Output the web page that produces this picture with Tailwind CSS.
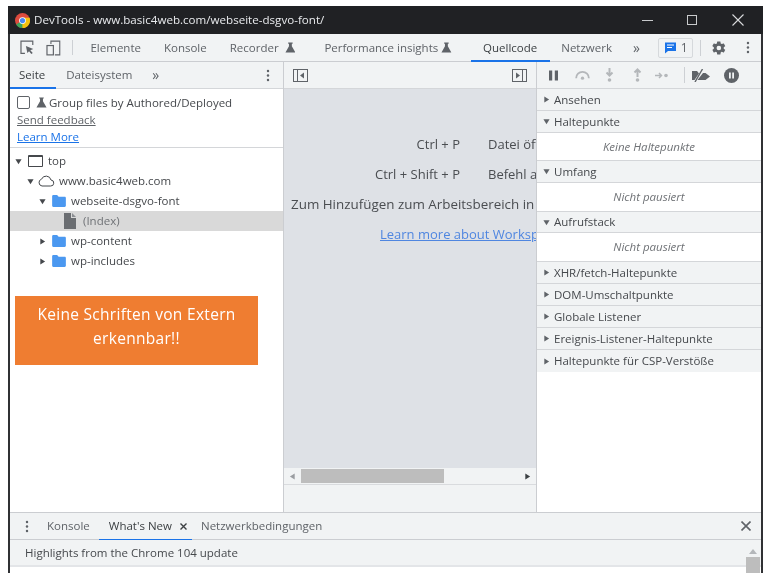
<!DOCTYPE html>
<html lang="de">
<head>
    <meta charset="UTF-8">
    <title>DevTools - www.basic4web.com/webseite-dsgvo-font/</title>
    <script src="https://cdn.jsdelivr.net/npm/@tailwindcss/browser@4"></script>
</head>
<body class="bg-white">
    <svg class="hidden">
        <symbol id="flask" viewBox="0 0 12 12"><path d="M3.500 .5h5v1.200H7.600v3L11.500 11.500H.5l3.900-6.800v-3H3.500z" fill="currentColor"/></symbol>
        <symbol id="folder" viewBox="0 0 16 14"><path d="M0 1.500C0 .7.600 0 1.400 0h4.400l1.800 2h7c.8 0 1.400.6 1.400 1.400v9.200c0 .8-.6 1.400-1.400 1.400H1.400C.6 14 0 13.400 0 12.600z" fill="#4b98f0"/></symbol>
        <symbol id="right" viewBox="0 0 8 8"><path d="M1.500 0.500 7 4 1.500 7.500z" fill="currentColor"/></symbol>
        <symbol id="down" viewBox="0 0 8 8"><path d="M0.500 1.500h7L4 7z" fill="currentColor"/></symbol>
        <symbol id="dots" viewBox="0 0 4 16"><circle cx="2" cy="2.500" r="1.500" fill="currentColor"/><circle cx="2" cy="8" r="1.500" fill="currentColor"/><circle cx="2" cy="13.500" r="1.500" fill="currentColor"/></symbol>
    </svg>

    <div class="h-[577px] w-[768px] overflow-hidden pt-[6px] pl-[8px] font-['Open_Sans',sans-serif] text-[11.500px] leading-none whitespace-nowrap text-[#5f6368] blur-[0.4px]">
        <div class="flex h-[567px] w-[755px] flex-col border-x-2 border-x-[#303134]">

            <!-- title bar -->
            <div class="-mx-[2px] flex h-[28px] shrink-0 items-center bg-[#202124] pl-[7px] text-[#e8eaed]">
                <svg class="h-[15px] w-[15px]" viewBox="0 0 16 16">
                    <circle cx="8" cy="8" r="8" fill="#dd4b3e"/>
                    <path d="M8 8 1.200 12.200A8 8 0 0 0 8 16l4-8z" fill="#3ba55c"/>
                    <path d="M8 8h-.5L8 16a8 8 0 0 0 7.500-11H8z" fill="#f4c20d"/>
                    <circle cx="8" cy="8" r="3.600" fill="#fff"/>
                    <circle cx="8" cy="8" r="2.800" fill="#4a8af4"/>
                </svg>
                <span class="ml-[4px] text-[11.600px]">DevTools - www.basic4web.com/webseite-dsgvo-font/</span>
                <div class="ml-auto flex items-center">
                    <div class="h-px w-[11px] bg-[#c8cacc]"></div>
                    <div class="ml-[34px] h-[10px] w-[10px] border border-[#c8cacc]"></div>
                    <svg class="mr-[19px] ml-[35px] h-[12px] w-[12px]" viewBox="0 0 12 12"><path d="M.5.500l11 11M11.500.500l-11 11" stroke="#d8dadc" stroke-width="1.100"/></svg>
                </div>
            </div>

            <!-- main toolbar -->
            <div class="relative flex h-[28px] shrink-0 items-center border-b border-[#cbcdd1] bg-[#f1f3f4] pr-[11px]">
                <svg class="ml-[10px] h-[15px] w-[15px]" viewBox="0 0 15 15" fill="none"><path d="M5 13.500H1V1h12v4" stroke="#5f6368" stroke-width="1.200"/><path d="M6 6l7.500 3-3 1.200 2.500 2.800-1.500 1-2.300-2.800L7.500 13z" fill="#5f6368"/></svg>
                <svg class="ml-[11px] h-[16px] w-[15px]" viewBox="0 0 15 16" fill="none"><path d="M5 4V1h9v14H9" stroke="#5f6368" stroke-width="1.100"/><rect x="1" y="5.500" width="6.500" height="9.500" stroke="#5f6368" stroke-width="1.200"/></svg>
                <div class="ml-[11px] h-[15px] w-px bg-[#cdd0d4]"></div>
                <span class="ml-[18px]">Elemente</span>
                <span class="ml-[23px]">Konsole</span>
                <span class="ml-[23px]">Recorder</span>
                <svg class="ml-[6px] h-[11px] w-[11px]"><use href="#flask"/></svg>
                <span class="ml-[29px]">Performance insights</span>
                <svg class="ml-[3px] h-[11px] w-[11px]"><use href="#flask"/></svg>
                <span class="relative ml-[31px] text-[#3c4043]">Quellcode<span class="absolute -right-[13px] -bottom-[9px] -left-[12px] h-[2px] bg-[#1a73e8]"></span></span>
                <span class="ml-[24px]">Netzwerk</span>
                <span class="ml-[21px] text-[14px] leading-[12px]">»</span>
                <div class="ml-[18px] flex h-[20px] w-[36px] items-center justify-center gap-[4px] rounded-[2px] border border-[#d6d9dc]">
                    <svg class="h-[13px] w-[13px]" viewBox="0 0 13 13"><path d="M1 1.500h11v8.500H4l-3 2.500z" fill="#1a73e8"/><path d="M3 4h7M3 6.500h5" stroke="#fff"/></svg>
                    <span class="text-[12px] text-[#5f6368]">1</span>
                </div>
                <div class="ml-[7px] h-[16px] w-px bg-[#cdd0d4]"></div>
                <svg class="ml-[10px] h-[16px] w-[16px]" viewBox="0 0 24 24"><path fill-rule="evenodd" d="M19.400 13c.1-.3.100-.7.100-1s0-.7-.1-1l2.100-1.600c.2-.2.200-.4.100-.6l-2-3.500c-.1-.2-.4-.3-.6-.2L16.500 6c-.5-.4-1.100-.7-1.700-1l-.4-2.600c0-.2-.2-.4-.5-.4h-4c-.3 0-.5.200-.5.400L9 5c-.6.300-1.200.6-1.700 1l-2.500-1c-.2-.1-.5 0-.6.200l-2 3.500c-.1.200-.1.500.1.600L4.400 11c-.1.300-.1.700-.1 1s0 .7.100 1l-2.100 1.600c-.2.200-.2.400-.1.600l2 3.500c.1.200.4.300.6.200l2.500-1c.5.400 1.100.7 1.700 1l.4 2.600c0 .2.200.4.500.4h4c.3 0 .5-.2.500-.4l.4-2.600c.6-.3 1.200-.6 1.700-1l2.500 1c.2.100.5 0 .6-.2l2-3.500c.1-.2.100-.5-.1-.6zM12 15.500a3.500 3.500 0 1 1 0-7 3.500 3.500 0 0 1 0 7z" fill="#5f6368"/></svg>
                <svg class="ml-[19px] h-[13px] w-[4px]"><use href="#dots"/></svg>
            </div>

            <!-- panels -->
            <div class="flex min-h-0 flex-1">

                <!-- navigator -->
                <div class="flex w-[274px] shrink-0 flex-col border-r border-[#cbcdd1] bg-white">
                    <div class="flex h-[27px] shrink-0 items-center border-b border-[#d4d6d9] bg-[#f1f3f4] pr-[13px]">
                        <span class="relative ml-[9px] text-[#3c4043]">Seite<span class="absolute -right-[11px] -bottom-[8px] -left-[9px] h-[2px] bg-[#1a73e8]"></span></span>
                        <span class="ml-[21px]">Dateisystem</span>
                        <span class="ml-[20px] text-[14px] leading-[12px]">»</span>
                        <svg class="ml-auto h-[13px] w-[4px]"><use href="#dots"/></svg>
                    </div>
                    <div class="flex h-[59px] shrink-0 flex-col border-b border-[#d4d6d9] pt-[6px] pl-[7px]">
                        <div class="flex h-[15px] items-center">
                            <span class="h-[13px] w-[13px] rounded-[2px] border border-[#5f6368]"></span>
                            <svg class="ml-[6px] h-[11px] w-[11px] text-[#5f6368]"><use href="#flask"/></svg>
                            <span class="ml-[2px] text-[#45484c]">Group files by Authored/Deployed</span>
                        </div>
                        <a class="mt-[2px] h-[15px] leading-[15px] underline">Send feedback</a>
                        <a class="mt-[2px] h-[15px] leading-[15px] text-[#1a73e8] underline">Learn More</a>
                    </div>
                    <div class="pt-[3px] text-[#45484c]">
                        <div class="flex h-[20px] items-center pl-[5px]">
                            <svg class="h-[7px] w-[7px]"><use href="#down"/></svg>
                            <span class="ml-[6px] h-[12px] w-[15px] rounded-[1px] border-[1.500px] border-t-[2.500px] border-[#45484c]"></span>
                            <span class="ml-[5px]">top</span>
                        </div>
                        <div class="flex h-[20px] items-center pl-[17px]">
                            <svg class="h-[7px] w-[7px]"><use href="#down"/></svg>
                            <svg class="ml-[3px] h-[12px] w-[18px]" viewBox="0 0 17 12" fill="none"><path d="M4.500 11h8.500a3 3 0 0 0 .5-6 5 5 0 0 0-9.500-.8A3.500 3.500 0 0 0 4.500 11z" stroke="#45484c" stroke-width="1"/></svg>
                            <span class="ml-[4px]">www.basic4web.com</span>
                        </div>
                        <div class="flex h-[20px] items-center pl-[29px]">
                            <svg class="h-[7px] w-[7px]"><use href="#down"/></svg>
                            <svg class="ml-[6px] h-[12px] w-[14px]"><use href="#folder"/></svg>
                            <span class="ml-[5px]">webseite-dsgvo-font</span>
                        </div>
                        <div class="flex h-[20px] items-center bg-[#d9d9d9] pl-[54px] text-[#6f7276]">
                            <svg class="h-[16px] w-[12px]" viewBox="0 0 12 16"><path d="M0 0h7v5h5v11H0z" fill="#6b6e72"/><path d="M8 0l4 4H8z" fill="#8b8e92"/></svg>
                            <span class="ml-[7px]">(Index)</span>
                        </div>
                        <div class="flex h-[20px] items-center pl-[29px]">
                            <svg class="h-[7px] w-[7px]"><use href="#right"/></svg>
                            <svg class="ml-[6px] h-[12px] w-[14px]"><use href="#folder"/></svg>
                            <span class="ml-[5px]">wp-content</span>
                        </div>
                        <div class="flex h-[20px] items-center pl-[29px]">
                            <svg class="h-[7px] w-[7px]"><use href="#right"/></svg>
                            <svg class="ml-[6px] h-[12px] w-[14px]"><use href="#folder"/></svg>
                            <span class="ml-[5px]">wp-includes</span>
                        </div>
                    </div>
                    <div class="mt-[25px] ml-[5px] flex h-[69px] w-[243px] flex-col items-center gap-[8px] bg-[#ef7d31] pt-[10px] text-[15.500px] leading-[16px] tracking-[0.3px] text-white">
                        <span>Keine Schriften von Extern</span>
                        <span>erkennbar!!</span>
                    </div>
                </div>

                <!-- editor -->
                <div class="flex w-[253px] shrink-0 flex-col overflow-hidden border-r border-[#cbcdd1] bg-[#f1f3f4]">
                    <div class="flex h-[27px] shrink-0 items-center justify-between border-b border-[#d4d6d9] px-[9px]">
                        <svg class="h-[13px] w-[15px]" viewBox="0 0 15 13" fill="none"><rect x=".5" y=".5" width="14" height="12" stroke="#5f6368"/><path d="M4.500 1v11" stroke="#5f6368"/><path d="M11 3.500v6L7 6.500z" fill="#5f6368"/></svg>
                        <svg class="h-[13px] w-[15px]" viewBox="0 0 15 13" fill="none"><rect x=".5" y=".5" width="14" height="12" stroke="#5f6368"/><path d="M10.500 1v11" stroke="#5f6368"/><path d="M4 3.500v6L8 6.500z" fill="#5f6368"/></svg>
                    </div>
                    <div class="flex h-[379px] shrink-0 flex-col items-start bg-[#dee1e6] pt-[45px] text-[13px] leading-[20px] text-[#4a4d51]">
                        <div class="flex h-[20px]"><span class="w-[176px] text-right">Ctrl + P</span><span class="ml-[28px]">Datei öffnen</span></div>
                        <div class="mt-[10px] flex h-[20px]"><span class="w-[176px] text-right">Ctrl + Shift + P</span><span class="ml-[28px]">Befehl ausführen</span></div>
                        <div class="mt-[10px] ml-[7px] h-[20px] text-[13.400px]">Zum Hinzufügen zum Arbeitsbereich in den Bereich ziehen</div>
                        <a class="mt-[10px] ml-[96px] h-[20px] text-[#4f86e0] underline">Learn more about Workspaces</a>
                    </div>
                    <div class="flex h-[17px] shrink-0 items-center border-b border-[#d9dbde] text-[#5f6368]">
                        <svg class="ml-[5px] h-[7px] w-[7px] rotate-180 text-[#9a9da1]"><use href="#right"/></svg>
                        <div class="ml-[5px] h-[14px] w-[143px] bg-[#bdbdbd]"></div>
                        <svg class="mr-[5px] ml-auto h-[7px] w-[7px] text-[#3c4043]"><use href="#right"/></svg>
                    </div>
                </div>

                <!-- debugger sidebar -->
                <div class="flex min-w-0 flex-1 flex-col bg-white">
                    <div class="flex h-[27px] shrink-0 items-center border-b border-[#d4d6d9] bg-[#f1f3f4] pl-[12px]">
                        <svg class="h-[11px] w-[9px]" viewBox="0 0 9 11"><path d="M0 .5h3.200v10H0zM5.800.5H9v10H5.800z" fill="#5f6368"/></svg>
                        <svg class="ml-[16px] h-[10px] w-[17px]" viewBox="0 0 18 11" fill="none"><path d="M2 9a7 7 0 0 1 14 0" stroke="#b4b7ba" stroke-width="2"/><circle cx="9" cy="9" r="1.800" fill="#b4b7ba"/></svg>
                        <svg class="ml-[14px] h-[14px] w-[9px]" viewBox="0 0 9 14" fill="none"><path d="M4.500 0v7M1.500 4.500l3 3 3-3" stroke="#b4b7ba" stroke-width="2"/><circle cx="4.500" cy="12" r="1.800" fill="#b4b7ba"/></svg>
                        <svg class="ml-[19px] h-[14px] w-[9px]" viewBox="0 0 9 14" fill="none"><path d="M4.500 9V2M1.500 4.500l3-3 3 3" stroke="#b4b7ba" stroke-width="2"/><circle cx="4.500" cy="12" r="1.800" fill="#b4b7ba"/></svg>
                        <svg class="ml-[13px] h-[9px] w-[14px]" viewBox="0 0 14 9" fill="none"><path d="M0 4.500h6M4 2l2.500 2.500L4 7" stroke="#b4b7ba" stroke-width="1.500"/><circle cx="11" cy="4.500" r="1.800" fill="#b4b7ba"/></svg>
                        <div class="ml-[15px] h-[16px] w-px bg-[#cdd0d4]"></div>
                        <svg class="ml-[7px] h-[13px] w-[18px]" viewBox="0 0 18 13"><path d="M0 2h5l2 2.500L2.500 11H0zM9 6.500 11 4h2.500L18 7.500 13.500 11H5.500z" fill="#5f6368"/><path d="M10.500 0 3 13" stroke="#5f6368" stroke-width="1.400"/></svg>
                        <svg class="ml-[14px] h-[15px] w-[15px]" viewBox="0 0 15 15"><circle cx="7.500" cy="7.500" r="7.500" fill="#5f6368"/><path d="M5 4.500h1.800v6H5zM8.200 4.500H10v6H8.200z" fill="#f1f3f4"/></svg>
                    </div>

                    <div class="flex h-[22px] shrink-0 items-center border-b border-[#d4d6d9] bg-[#f1f3f4] pl-[6px] text-[#45484c]"><svg class="h-[7px] w-[7px] text-[#5f6368]"><use href="#right"/></svg><span class="ml-[4px]">Ansehen</span></div>
                    <div class="flex h-[22px] shrink-0 items-center border-b border-[#d4d6d9] bg-[#f1f3f4] pl-[6px] text-[#45484c]"><svg class="h-[7px] w-[7px] text-[#5f6368]"><use href="#down"/></svg><span class="ml-[4px]">Haltepunkte</span></div>
                    <div class="flex h-[28px] shrink-0 items-center justify-center border-b border-[#d4d6d9] text-[#6f7276] italic">Keine Haltepunkte</div>
                    <div class="flex h-[22px] shrink-0 items-center border-b border-[#d4d6d9] bg-[#f1f3f4] pl-[6px] text-[#45484c]"><svg class="h-[7px] w-[7px] text-[#5f6368]"><use href="#down"/></svg><span class="ml-[4px]">Umfang</span></div>
                    <div class="flex h-[29px] shrink-0 items-center justify-center border-b border-[#d4d6d9] text-[#6f7276] italic">Nicht pausiert</div>
                    <div class="flex h-[21px] shrink-0 items-center border-b border-[#d4d6d9] bg-[#f1f3f4] pl-[6px] text-[#45484c]"><svg class="h-[7px] w-[7px] text-[#5f6368]"><use href="#down"/></svg><span class="ml-[4px]">Aufrufstack</span></div>
                    <div class="flex h-[29px] shrink-0 items-center justify-center border-b border-[#d4d6d9] text-[#6f7276] italic">Nicht pausiert</div>
                    <div class="flex h-[22px] shrink-0 items-center border-b border-[#d4d6d9] bg-[#f1f3f4] pl-[6px] text-[#45484c]"><svg class="h-[7px] w-[7px] text-[#5f6368]"><use href="#right"/></svg><span class="ml-[4px]">XHR/fetch-Haltepunkte</span></div>
                    <div class="flex h-[22px] shrink-0 items-center border-b border-[#d4d6d9] bg-[#f1f3f4] pl-[6px] text-[#45484c]"><svg class="h-[7px] w-[7px] text-[#5f6368]"><use href="#right"/></svg><span class="ml-[4px]">DOM-Umschaltpunkte</span></div>
                    <div class="flex h-[22px] shrink-0 items-center border-b border-[#d4d6d9] bg-[#f1f3f4] pl-[6px] text-[#45484c]"><svg class="h-[7px] w-[7px] text-[#5f6368]"><use href="#right"/></svg><span class="ml-[4px]">Globale Listener</span></div>
                    <div class="flex h-[22px] shrink-0 items-center border-b border-[#d4d6d9] bg-[#f1f3f4] pl-[6px] text-[#45484c]"><svg class="h-[7px] w-[7px] text-[#5f6368]"><use href="#right"/></svg><span class="ml-[4px]">Ereignis-Listener-Haltepunkte</span></div>
                    <div class="flex h-[22px] shrink-0 items-center bg-[#f1f3f4] pl-[6px] text-[#45484c]"><svg class="h-[7px] w-[7px] text-[#5f6368]"><use href="#right"/></svg><span class="ml-[4px]">Haltepunkte für CSP-Verstöße</span></div>
                </div>
            </div>

            <!-- drawer -->
            <div class="flex h-[28px] shrink-0 items-center border-y border-[#cbcdd1] bg-[#f1f3f4] pr-[10px]">
                <svg class="ml-[15px] h-[13px] w-[4px]"><use href="#dots"/></svg>
                <span class="ml-[18px]">Konsole</span>
                <span class="relative ml-[19px] text-[#3c4043]">What's New<span class="absolute -right-[20px] -bottom-[9px] -left-[10px] h-[2px] bg-[#1a73e8]"></span></span>
                <svg class="ml-[8px] h-[7px] w-[7px]" viewBox="0 0 7 7"><path d="M.5.500l6 6M6.500.500l-6 6" stroke="#3c4043" stroke-width="1.400"/></svg>
                <span class="ml-[14px]">Netzwerkbedingungen</span>
                <svg class="ml-auto h-[10px] w-[10px]" viewBox="0 0 10 10"><path d="M.5.500l9 9M9.500.500l-9 9" stroke="#5f6368" stroke-width="1.600"/></svg>
            </div>
            <div class="relative flex h-[27px] shrink-0 items-center border-b-[2px] border-[#e3e5e8] bg-[#f1f3f4] pl-[15px] text-[#45484c]">
                Highlights from the Chrome 104 update
                <svg class="absolute top-[9px] right-[4px] h-[5px] w-[8px]" viewBox="0 0 8 5"><path d="M4 0l4 5H0z" fill="#b4b7ba"/></svg>
                <div class="absolute top-[17px] right-[1px] h-[16px] w-[14px] bg-[#bdbdbd]"></div>
            </div>
            <div class="h-[6px] shrink-0 bg-white"></div>
        </div>
    </div>
</body>
</html>
